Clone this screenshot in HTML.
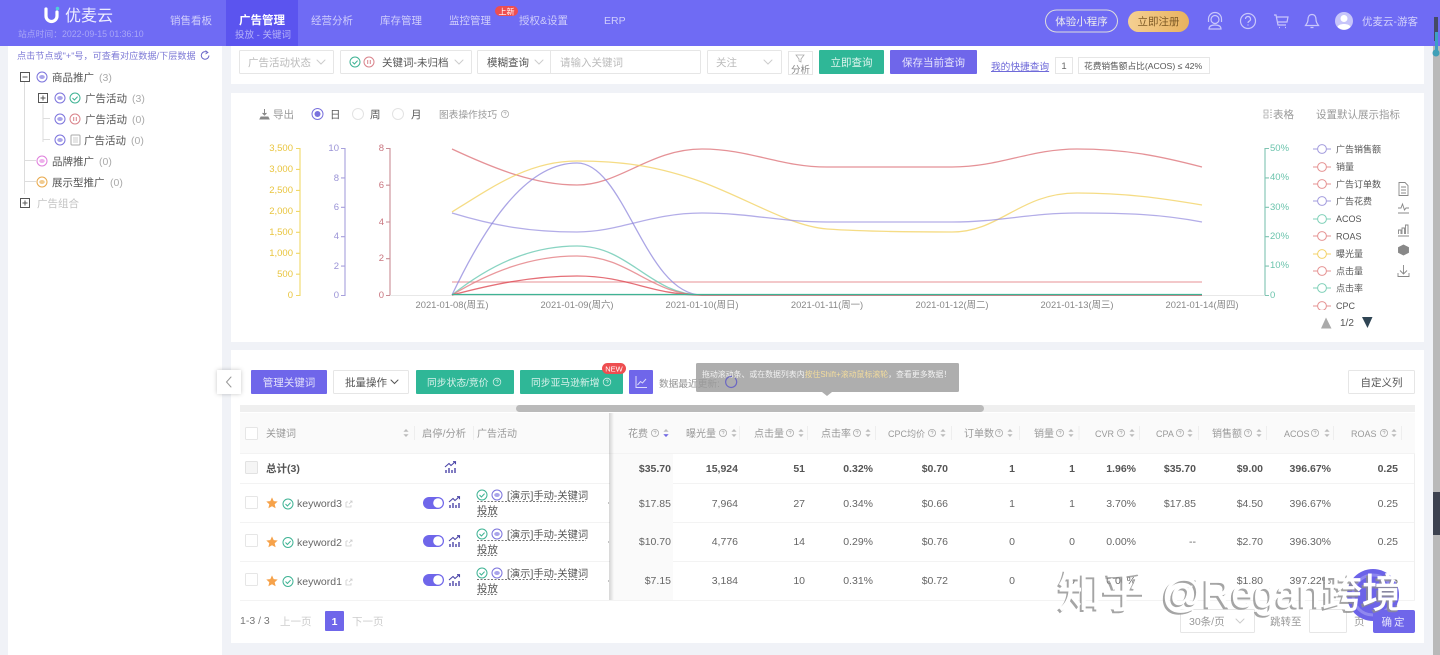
<!DOCTYPE html>
<html lang="zh"><head><meta charset="utf-8"><title>优麦云 - 广告管理</title>
<style>
html,body{margin:0;padding:0;width:1440px;height:655px;overflow:hidden;background:#f0f2f7}
svg{display:block;position:absolute;left:0;top:0;filter:blur(.3px)}
text{font-family:"Liberation Sans","Noto Sans CJK SC",sans-serif;font-size:10.5px;fill:#666}
.nav{fill:#cfcdfb;font-size:10.5px}
.g{fill:#aaa}.d{fill:#555}.w{fill:#fff}
.b{font-weight:bold;fill:#555}
.r{text-anchor:end}.c{text-anchor:middle}
.h{fill:#999;font-size:10px}
.hl{fill:#999;font-size:9px}
.l{fill:#555;font-size:9px}
.x{fill:#888;font-size:9.400px;text-anchor:middle}
.box{fill:#fff;stroke:#e6e6e6}
.cn{fill:none;stroke-linecap:round}
.tree{stroke:#ddd;fill:none}
.ln{fill:none;stroke-width:1.3;opacity:.75}
.ay{fill:#e9c53f;font-size:9.500px}.ap{fill:#9a93d6;font-size:9.500px}.ar{fill:#c9757f;font-size:9.500px}.ag{fill:#6cc4ad;font-size:9.500px}
</style></head><body>
<svg width="1440" height="655" viewBox="0 0 1440 655" xmlns="http://www.w3.org/2000/svg">
<defs>
<g id="chk"><circle r="5" fill="#fff" stroke="#3fb394"/><path d="M-2.500 0l1.900 2 3.200-3.400" fill="none" stroke="#3fb394"/></g>
<g id="pau"><circle r="5" fill="#fff" stroke="#d9838b"/><path d="M-1.300-2v4M1.300-2v4" stroke="#d9838b"/></g>
<g id="sp"><circle r="5" fill="#fff" stroke="#7b73dc"/><ellipse rx="2.800" ry="2" fill="#a9a4ea"/></g>
<g id="sb"><circle r="5" fill="#fff" stroke="#df7fdc"/><ellipse rx="2.800" ry="2" fill="#eeb0ec"/></g>
<g id="sd"><circle r="5" fill="#fff" stroke="#e8a94c"/><ellipse rx="2.800" ry="2" fill="#f1cb90"/></g>
<g id="q"><circle r="3.600" fill="none" stroke="#aaa" stroke-width=".8"/><path d="M-1.100-.9a1.100 1.100 0 1 1 1.600 1l-.5.6M0 1.900v.3" fill="none" stroke="#aaa" stroke-width=".7"/></g>
<g id="s"><path d="M-2.600-1.200L0-4l2.600 2.800zM-2.600 1.200L0 4l2.600-2.800z" fill="#bbb"/></g>
<g id="plus"><rect x="-4.500" y="-4.500" width="9" height="9" fill="#fff" stroke="#555"/><path d="M-2.500 0h5M0-2.500v5" stroke="#555"/></g>
<g id="minus"><rect x="-4.500" y="-4.500" width="9" height="9" fill="#fff" stroke="#555"/><path d="M-2.500 0h5" stroke="#555"/></g>
<g id="tr"><path d="M-5 5v-3M-2 5v-5M1 5v-3M4 5v-5" stroke="#4b45a8" stroke-width="1.400"/><path d="M-6-1L-2-4.500 0-2.500 4-6M2-6.300h2.500v2.500" fill="none" stroke="#4b45a8" stroke-width="1.100"/></g>
<g id="star"><path d="M0-5.600l1.700 3.700 4 .4-3 2.700.9 4L0 3.200l-3.600 2 .9-4-3-2.700 4-.4z" fill="#f6a24a"/></g>
<g id="ext"><path d="M-3-2h2M-3-2v5h5v-2M0 0l3-3M1-3h2v2" fill="none" stroke="#ccc" stroke-width=".8"/></g>
<g id="lgp"><path d="M-9 0h18" stroke="#a29bdd"/><circle r="4.400" fill="#fff" stroke="#a29bdd"/></g>
<g id="lgr"><path d="M-9 0h18" stroke="#e59292"/><circle r="4.400" fill="#fff" stroke="#e59292"/></g>
<g id="lgg"><path d="M-9 0h18" stroke="#7fd0b8"/><circle r="4.400" fill="#fff" stroke="#7fd0b8"/></g>
<g id="lgy"><path d="M-9 0h18" stroke="#f3d268"/><circle r="4.400" fill="#fff" stroke="#f3d268"/></g>
<clipPath id="lgclip"><rect x="1310" y="140" width="100" height="170"/></clipPath>
<linearGradient id="gd" x1="0" x2="1" y1="0" y2="0"><stop offset="0" stop-color="#f5d092"/><stop offset="1" stop-color="#e8b25f"/></linearGradient>
<linearGradient id="sh" x1="0" x2="1" y1="0" y2="0"><stop offset="0" stop-color="#000" stop-opacity=".16"/><stop offset="1" stop-color="#000" stop-opacity="0"/></linearGradient>
</defs>

<!-- backgrounds -->
<rect width="1440" height="655" fill="#f0f2f7"/>
<rect x="8" y="46" width="214" height="609" fill="#fff"/>
<rect x="231" y="46" width="1193" height="38" fill="#fff"/>
<rect x="231" y="93" width="1193" height="249" fill="#fff"/>
<rect x="231" y="350" width="1193" height="293" fill="#fff"/>

<!-- page scrollbar -->
<rect x="1433" y="46" width="7" height="609" fill="#b9b9b9"/>
<rect x="1433" y="0" width="7" height="46" fill="#6f6bf4"/>
<rect x="1434" y="17" width="4" height="24" fill="#444a66"/>
<rect x="1435" y="32" width="3" height="20" fill="#3d9fc4"/>
<circle cx="1436" cy="53" r="3.500" fill="#3fa0b8"/>
<rect x="1433" y="492" width="7" height="43" fill="#3d4250"/>

<!-- header -->
<rect width="1433" height="46" fill="#6f6bf4"/>
<rect x="226" width="72" height="46" fill="#5b54ef"/>
<path d="M46 9v7a5.500 5.500 0 0 0 11 0V12" fill="none" stroke="#fff" stroke-width="3.200" stroke-linecap="round"/>
<circle cx="57.500" cy="8.500" r="1.800" fill="#4fd0d8"/>
<text x="65" y="21" style="font-size:16px;fill:#eeeeff">优麦云</text>
<text x="18" y="37" style="font-size:8.800px;fill:#a9a6f6">站点时间：2022-09-15 01:36:10</text>
<text x="170" y="24" class="nav">销售看板</text>
<text x="239" y="24" class="w" style="font-size:11.500px;font-weight:bold">广告管理</text>
<text x="235" y="38" style="font-size:9.500px;fill:#b6b3f8">投放 - 关键词</text>
<text x="311" y="24" class="nav">经营分析</text>
<text x="380" y="24" class="nav">库存管理</text>
<text x="449" y="24" class="nav">监控管理</text>
<rect x="495" y="6" width="23" height="10" rx="5" fill="#ee4e50"/>
<text x="506.500" y="14.500" class="w c" style="font-size:8px">上新</text>
<text x="519" y="24" class="nav">授权&amp;设置</text>
<text x="604" y="24" class="nav" style="font-size:10.500px">ERP</text>
<rect x="1045.500" y="10" width="72" height="22" rx="11" fill="none" stroke="#ddd" stroke-width="1"/>
<text x="1081.500" y="25" class="c" style="fill:#eee;font-size:10.500px">体验小程序</text>
<rect x="1128" y="11" width="61" height="21" rx="10.500" fill="url(#gd)"/>
<text x="1158.500" y="25" class="c" style="fill:#7d5a26;font-size:10.500px">立即注册</text>
<g fill="none" stroke="#c9c7fa" stroke-width="1.200">
<circle cx="1215" cy="19.500" r="4"/><path d="M1208.500 22v-3a6.500 6.500 0 0 1 13 0v3M1209 29c0-3 3-4 6-4s6 1 6 4z"/>
<circle cx="1248" cy="21" r="7.500"/><path d="M1245.500 19a2.500 2.500 0 1 1 3.500 2.300c-.8.400-1 .8-1 1.700M1248 24.500v1"/>
<path d="M1274 15h2l2 10h8M1277 17h11l-1 5h-9M1279 27.500h1M1285 27.500h1"/>
<path d="M1312 14.500c-3 0-4 2.500-4 5 0 3-1.500 4.500-2.500 6h13c-1-1.500-2.500-3-2.500-6 0-2.500-1-5-4-5zM1310.500 27.500h3"/>
</g>
<circle cx="1344" cy="21" r="9" fill="#c7c5fa"/><circle cx="1344" cy="18.500" r="3.500" fill="#fff"/><path d="M1337.500 27c1-4 12-4 13 0a9 9 0 0 1-13 0z" fill="#fff"/>
<text x="1362" y="25" style="fill:#d5d3fb;font-size:10.500px">优麦云-游客</text>

<!-- sidebar -->
<text x="17" y="59" style="fill:#7d79d6;font-size:9.150px">点击节点或"+"号，可查看对应数据/下层数据</text>
<path d="M207.500 52.500a3.800 3.800 0 1 0 1.400 3" fill="none" stroke="#6b68c8"/><path d="M205.500 50.500l2.500 2-2.500 1.500" fill="none" stroke="#6b68c8" stroke-width=".8"/>
<path class="tree" d="M24.500 82v112M43 104v38M43 118.500h7M43 139.500h7M25 160.500h11M25 181.500h11"/>
<use href="#minus" x="25" y="77"/>
<use href="#sp" x="42" y="77"/><text x="52" y="81" class="d">商品推广</text><text x="99" y="81" class="g">(3)</text>
<use href="#plus" x="43" y="98"/><use href="#sp" x="60" y="98"/><use href="#chk" x="75" y="98"/><text x="85" y="102" class="d">广告活动</text><text x="132" y="102" class="g">(3)</text>
<use href="#sp" x="60" y="119"/><use href="#pau" x="75" y="119"/><text x="85" y="123" class="d">广告活动</text><text x="132" y="123" class="g">(0)</text>
<use href="#sp" x="60" y="140"/><rect x="71" y="135" width="9" height="10" rx="1" fill="#fff" stroke="#aaa"/><path d="M73 138h5M73 140h5M73 142h5" stroke="#bbb" stroke-width=".7"/><text x="84" y="144" class="d">广告活动</text><text x="131" y="144" class="g">(0)</text>
<use href="#sb" x="42" y="161"/><text x="52" y="165" class="d">品牌推广</text><text x="99" y="165" class="g">(0)</text>
<use href="#sd" x="42" y="182"/><text x="52" y="186" class="d">展示型推广</text><text x="110" y="186" class="g">(0)</text>
<use href="#plus" x="25" y="203"/><text x="37" y="207" style="fill:#c4c4c4">广告组合</text>

<!-- filter row -->
<rect class="box" x="239.500" y="50.500" width="94" height="23" rx="1"/><text x="248" y="66" style="fill:#bbb">广告活动状态</text><path class="cn" d="M317 60l4 4 4-4" stroke="#ccc"/>
<rect class="box" x="340.500" y="50.500" width="131" height="23" rx="1"/><use href="#chk" x="355" y="62"/><use href="#pau" x="369" y="62"/><text x="382" y="66" class="d">关键词-未归档</text><path class="cn" d="M455 60l4 4 4-4" stroke="#ccc"/>
<rect class="box" x="477.500" y="50.500" width="223" height="23" rx="1"/><path d="M550.500 51v22" stroke="#e6e6e6"/><text x="487" y="66" class="d">模糊查询</text><path class="cn" d="M535 60l4 4 4-4" stroke="#ccc"/><text x="560" y="66" style="fill:#bbb">请输入关键词</text>
<rect class="box" x="707.500" y="50.500" width="74" height="23" rx="1"/><text x="716" y="66" style="fill:#bbb">关注</text><path class="cn" d="M764 60l4 4 4-4" stroke="#ccc"/>
<rect class="box" x="788.500" y="51.500" width="24" height="23"/><path d="M796 55h8l-3 4v3l-2-1v-2z" fill="none" stroke="#aaa" stroke-width=".8"/><text x="800.500" y="73" class="c" style="font-size:9.500px;fill:#888">分析</text>
<rect x="819" y="50" width="65" height="24" rx="1" fill="#2fb797"/><text x="851.500" y="66" class="c" style="fill:#dff5ee">立即查询</text>
<rect x="890" y="50" width="87" height="24" rx="1" fill="#6f66ea"/><text x="933.500" y="66" class="c" style="fill:#e6e4fc">保存当前查询</text>
<text x="991" y="70" style="fill:#6b66d8;font-size:9.700px;text-decoration:underline">我的快捷查询</text>
<rect class="box" x="1055.500" y="57.500" width="17" height="16"/><text x="1064" y="69" class="c" style="font-size:9.500px">1</text>
<rect class="box" x="1078.500" y="57.500" width="131" height="16"/><text x="1084" y="69" class="d" style="font-size:8.700px">花费销售额占比(ACOS) ≤ 42%</text>

<!-- chart toolbar -->
<path d="M261 117h7l1 2h-9zM264.500 109v6M262.500 113l2 2 2-2" fill="#888" stroke="#888" stroke-width="1"/>
<text x="273" y="118" style="fill:#999">导出</text>
<circle cx="317.500" cy="114" r="5.500" fill="#fff" stroke="#7a72dd"/><circle cx="317.500" cy="114" r="3" fill="#7a72dd"/><text x="330" y="118" class="d">日</text>
<circle cx="358" cy="114" r="5.500" fill="#fff" stroke="#e3e3e3"/><text x="370" y="118" class="d">周</text>
<circle cx="398" cy="114" r="5.500" fill="#fff" stroke="#e3e3e3"/><text x="411" y="118" class="d">月</text>
<text x="439" y="118" style="fill:#999;font-size:9.700px">图表操作技巧</text><use href="#q" x="505" y="114"/>
<path d="M1264 110h4v3h-4zM1264 115h4v3h-4zM1270 110h2M1270 112.500h2M1270 115h2M1270 117.500h2" fill="none" stroke="#aaa" stroke-width=".8"/>
<text x="1273" y="118" style="fill:#999">表格</text>
<text x="1316" y="118" style="fill:#999;font-size:10.500px">设置默认展示指标</text>

<!-- chart axes -->
<g fill="none" stroke-width="1.100">
<path d="M296 148.500h4v147h-4M296 169.400h4M296 190.400h4M296 211.400h4M296 232.300h4M296 253.300h4M296 274.200h4" stroke="#f0d868"/>
<path d="M341 148.500h4v147h-4M341 177.900h4M341 207.300h4M341 236.700h4M341 266.100h4" stroke="#a7a0dc"/>
<path d="M386 148.500h4v147h-4M386 185.200h4M386 222h4M386 258.700h4" stroke="#c98d95"/>
<path d="M1269 148.500h-4v147h4M1269 177.900h-4M1269 207.300h-4M1269 236.700h-4M1269 266.100h-4" stroke="#7fc4b2"/>
</g>
<path d="M390 295.500h875" stroke="#e8e8e8"/>
<text x="293" y="151" class="r ay">3,500</text><text x="293" y="172" class="r ay">3,000</text><text x="293" y="193" class="r ay">2,500</text><text x="293" y="214" class="r ay">2,000</text><text x="293" y="235" class="r ay">1,500</text><text x="293" y="256" class="r ay">1,000</text><text x="293" y="277" class="r ay">500</text><text x="293" y="298" class="r ay">0</text>
<text x="339" y="151" class="r ap">10</text><text x="339" y="181" class="r ap">8</text><text x="339" y="210" class="r ap">6</text><text x="339" y="239" class="r ap">4</text><text x="339" y="269" class="r ap">2</text><text x="339" y="298" class="r ap">0</text>
<text x="384" y="151" class="r ar">8</text><text x="384" y="188" class="r ar">6</text><text x="384" y="225" class="r ar">4</text><text x="384" y="261" class="r ar">2</text><text x="384" y="298" class="r ar">0</text>
<text x="1270" y="151" class="ag">50%</text><text x="1270" y="180" class="ag">40%</text><text x="1270" y="210" class="ag">30%</text><text x="1270" y="239" class="ag">20%</text><text x="1270" y="268" class="ag">10%</text><text x="1270" y="298" class="ag">0</text>
<text x="452" y="308" class="x">2021-01-08(周五)</text><text x="577" y="308" class="x">2021-01-09(周六)</text><text x="702" y="308" class="x">2021-01-10(周日)</text><text x="827" y="308" class="x">2021-01-11(周一)</text><text x="952" y="308" class="x">2021-01-12(周二)</text><text x="1077" y="308" class="x">2021-01-13(周三)</text><text x="1202" y="308" class="x">2021-01-14(周四)</text>

<!-- chart lines -->
<path class="ln" stroke="#e58a8f" d="M452 282H1202"/>
<path class="ln" stroke="#dc6d74" d="M452 149C495 169 535 185 577 185C620 185 650 149 702 149C750 149 780 167 827 167H952C1000 167 1030 149 1077 149C1125 149 1160 156 1202 167"/>
<path class="ln" stroke="#f2d05c" d="M452 212C495 185 530 161 577 161C625 161 660 167 702 182C750 200 790 226 827 229C870 232 920 232 952 232C1000 232 1020 193 1077 193C1125 193 1160 198 1202 205"/>
<path class="ln" stroke="#9a92e0" d="M452 213C495 226 530 232 577 232C620 232 650 213 702 213C750 213 780 222 827 222H952C1000 222 1030 213 1077 213C1125 213 1160 214 1202 222"/>
<path class="ln" stroke="#8f87dc" d="M452 295C490 215 530 163 577 163C625 163 645 295 702 295H1202"/>
<path class="ln" stroke="#62c6ae" d="M452 295C490 265 530 246 577 246C630 246 650 295 702 295H1202"/>
<path class="ln" stroke="#e2757b" d="M452 295C490 272 530 256 577 256C630 256 650 295 702 295H1202"/>
<path class="ln" stroke="#dc3f4a" d="M452 295C490 285 530 276 577 276C630 276 650 295 702 295H1202"/>
<path d="M452 294.500H1202" fill="none" stroke="#3fb394" stroke-width="1.300"/>

<!-- legend -->
<g clip-path="url(#lgclip)">
<use href="#lgp" x="1322" y="149"/><use href="#lgr" x="1322" y="167"/><use href="#lgr" x="1322" y="184"/><use href="#lgp" x="1322" y="201"/><use href="#lgg" x="1322" y="219"/><use href="#lgr" x="1322" y="236"/><use href="#lgy" x="1322" y="254"/><use href="#lgr" x="1322" y="271"/><use href="#lgg" x="1322" y="288"/><use href="#lgr" x="1322" y="306"/>
</g>
<text x="1336" y="152.500" class="l">广告销售额</text><text x="1336" y="170" class="l">销量</text><text x="1336" y="187.500" class="l">广告订单数</text><text x="1336" y="204.500" class="l">广告花费</text><text x="1336" y="222" class="l">ACOS</text><text x="1336" y="239.500" class="l">ROAS</text><text x="1336" y="257" class="l">曝光量</text><text x="1336" y="274.500" class="l">点击量</text><text x="1336" y="291.500" class="l">点击率</text><text x="1336" y="309" class="l">CPC</text>
<path d="M1321 328.500l5-11 5.500 11z" fill="#aaa"/><text x="1340" y="326" class="l" style="font-size:10px">1/2</text><path d="M1362 317h10.500l-5 11z" fill="#2f4554"/>
<g fill="none" stroke="#888" stroke-width=".9">
<path d="M1399 182.500h6l3 3v10h-9zM1401 187h5M1401 190h5M1401 193h5"/>
<path d="M1398 208h3l1.500-4 2 6 1.500-2h3M1398 213h11"/>
<path d="M1398.500 234v-4h2.500v4M1402 234v-6h2.500v6M1405.500 234v-9h2.500v9M1398 236h11"/>
<path d="M1403.500 245l5 2.500v5l-5 2.500-5-2.500v-5z" fill="#888"/>
<path d="M1403.500 265v9M1400 270.500l3.500 3.500 3.500-3.500M1398 273v3.500h11V273"/>
</g>

<!-- table toolbar -->
<rect x="217" y="370" width="24" height="24" fill="#fff" style="filter:drop-shadow(0 0 2px rgba(0,0,0,.22))"/>
<path class="cn" d="M231 377l-4.500 5 4.500 5" stroke="#999"/>
<rect x="251" y="370" width="76" height="24" rx="1" fill="#6f66ea"/><text x="289" y="386" class="c" style="fill:#e3e1fb">管理关键词</text>
<rect class="box" x="333.500" y="370.500" width="75" height="23" rx="1"/><text x="345" y="386" class="d">批量操作</text><path class="cn" d="M391 380l3.500 3.500 3.500-3.500" stroke="#555"/>
<rect x="416" y="370" width="98" height="24" rx="1" fill="#2fb797"/><text x="427" y="386" style="fill:#d7f1ea;font-size:9.800px">同步状态/竞价</text><g transform="translate(497 382)"><circle r="3.800" fill="none" stroke="#cdeee5" stroke-width=".8"/><path d="M-1-.9a1.100 1.100 0 1 1 1.500 1L0 .8M0 2v.3" fill="none" stroke="#cdeee5" stroke-width=".7"/></g>
<rect x="520" y="370" width="103" height="24" rx="1" fill="#2fb797"/><text x="531" y="386" style="fill:#d7f1ea;font-size:9.800px">同步亚马逊新增</text><g transform="translate(607 382)"><circle r="3.800" fill="none" stroke="#cdeee5" stroke-width=".8"/><path d="M-1-.9a1.100 1.100 0 1 1 1.500 1L0 .8M0 2v.3" fill="none" stroke="#cdeee5" stroke-width=".7"/></g>
<rect x="602" y="363" width="24" height="11" rx="5.500" fill="#ee4e50"/><text x="614" y="371.500" class="c w" style="font-size:7.500px">NEW</text>
<rect x="629" y="370" width="24" height="24" rx="1" fill="#6f66ea"/><path d="M636 376v11.500h11M637.500 385l3-3.500 2 1.500 3.500-4" fill="none" stroke="#dcdafa"/>
<text x="659" y="387" style="fill:#aaa;font-size:9.700px">数据最近更新:</text>
<path d="M735 378a5.500 5.500 0 1 1-3-1.500" fill="none" stroke="#6f66ea" stroke-width="1.200"/>
<rect class="box" x="1348.500" y="370.500" width="66" height="23" rx="1"/><text x="1381.500" y="386" class="c d">自定义列</text>

<!-- table -->
<rect x="240" y="405" width="1175" height="7" fill="#efefef"/>
<rect x="516" y="405" width="468" height="7" rx="3.500" fill="#bababa"/>
<rect x="240" y="413" width="1175" height="40" fill="#fafafa"/>
<path d="M240 453.500h1175M240 483.500h1175M240 522.500h1175M240 561.500h1175M240 600.500h1175" stroke="#f3f3f3"/>
<rect x="610" y="454" width="63" height="146" fill="#fafafa"/>
<path d="M1414.500 454v146" stroke="#efefef"/>

<!-- tooltip -->
<rect x="696" y="363" width="263" height="29" rx="1.500" fill="#aeaeae"/>
<path d="M822 392h10l-5 4z" fill="#aeaeae"/>
<text x="702" y="377" style="font-size:7.900px;fill:#f2f2f2">拖动滚动条、或在数据列表内<tspan style="fill:#f3dc9c">按住Shift+滚动鼠标滚轮</tspan>，查看更多数据！</text>
<text x="659" y="387" style="fill:#777;font-size:9.700px;opacity:.35">数据最近更新:</text>
<path d="M735 378a5.500 5.500 0 1 1-3-1.500" fill="none" stroke="#5a55c8" stroke-width="1.200" opacity=".8"/>

<!-- right headers -->
<text x="628" y="437" class="h">花费</text><use href="#q" x="655" y="433"/><use href="#s" x="666" y="433"/><path d="M663.400 434.200L666 437l2.600-2.800z" fill="#6f66ea"/>
<text x="686" y="437" class="h">曝光量</text><use href="#q" x="723" y="433"/><use href="#s" x="734" y="433"/>
<text x="754" y="437" class="h">点击量</text><use href="#q" x="790" y="433"/><use href="#s" x="801" y="433"/>
<text x="821" y="437" class="h">点击率</text><use href="#q" x="857" y="433"/><use href="#s" x="868" y="433"/>
<text x="888" y="437" class="hl">CPC均价</text><use href="#q" x="932" y="433"/><use href="#s" x="943" y="433"/>
<text x="964" y="437" class="h">订单数</text><use href="#q" x="999" y="433"/><use href="#s" x="1010" y="433"/>
<text x="1034" y="437" class="h">销量</text><use href="#q" x="1060" y="433"/><use href="#s" x="1071" y="433"/>
<text x="1095" y="437" class="hl">CVR</text><use href="#q" x="1121" y="433"/><use href="#s" x="1132" y="433"/>
<text x="1156" y="437" class="hl">CPA</text><use href="#q" x="1180" y="433"/><use href="#s" x="1190" y="433"/>
<text x="1212" y="437" class="h">销售额</text><use href="#q" x="1248" y="433"/><use href="#s" x="1259" y="433"/>
<text x="1284" y="437" class="hl">ACOS</text><use href="#q" x="1315" y="433"/><use href="#s" x="1327" y="433"/>
<text x="1351" y="437" class="hl">ROAS</text><use href="#q" x="1384" y="433"/><use href="#s" x="1394" y="433"/>
<path d="M739.500 426v14M807.500 426v14M875.500 426v14M951.500 426v14M1019.500 426v14M1079 426v14M1139.500 426v14M1198.500 426v14M1266.500 426v14M1333.500 426v14M1401.500 426v14" stroke="#eee"/>

<!-- right values -->
<text x="671" y="472" class="r b">$35.70</text><text x="738" y="472" class="r b">15,924</text><text x="805" y="472" class="r b">51</text><text x="873" y="472" class="r b">0.32%</text><text x="948" y="472" class="r b">$0.70</text><text x="1015" y="472" class="r b">1</text><text x="1075" y="472" class="r b">1</text><text x="1136" y="472" class="r b">1.96%</text><text x="1196" y="472" class="r b">$35.70</text><text x="1263" y="472" class="r b">$9.00</text><text x="1331" y="472" class="r b">396.67%</text><text x="1398" y="472" class="r b">0.25</text>
<text x="671" y="507" class="r">$17.85</text><text x="738" y="507" class="r">7,964</text><text x="805" y="507" class="r">27</text><text x="873" y="507" class="r">0.34%</text><text x="948" y="507" class="r">$0.66</text><text x="1015" y="507" class="r">1</text><text x="1075" y="507" class="r">1</text><text x="1136" y="507" class="r">3.70%</text><text x="1196" y="507" class="r">$17.85</text><text x="1263" y="507" class="r">$4.50</text><text x="1331" y="507" class="r">396.67%</text><text x="1398" y="507" class="r">0.25</text>
<text x="671" y="545" class="r">$10.70</text><text x="738" y="545" class="r">4,776</text><text x="805" y="545" class="r">14</text><text x="873" y="545" class="r">0.29%</text><text x="948" y="545" class="r">$0.76</text><text x="1015" y="545" class="r">0</text><text x="1075" y="545" class="r">0</text><text x="1136" y="545" class="r">0.00%</text><text x="1196" y="545" class="r">--</text><text x="1263" y="545" class="r">$2.70</text><text x="1331" y="545" class="r">396.30%</text><text x="1398" y="545" class="r">0.25</text>
<text x="671" y="584" class="r">$7.15</text><text x="738" y="584" class="r">3,184</text><text x="805" y="584" class="r">10</text><text x="873" y="584" class="r">0.31%</text><text x="948" y="584" class="r">$0.72</text><text x="1015" y="584" class="r">0</text><text x="1075" y="584" class="r">0</text><text x="1136" y="584" class="r">0.00%</text><text x="1196" y="584" class="r">--</text><text x="1263" y="584" class="r">$1.80</text><text x="1331" y="584" class="r">397.22%</text><text x="1398" y="584" class="r">0.25</text>

<!-- fixed left columns -->
<rect x="240" y="413" width="369" height="187" fill="#fff"/>
<rect x="240" y="413" width="369" height="40" fill="#fafafa"/>
<rect x="609" y="413" width="5" height="187" fill="url(#sh)"/>
<path d="M240 453.500h369M240 483.500h369M240 522.500h369M240 561.500h369M240 600.500h369" stroke="#f3f3f3"/>
<path d="M608 503h1M608 542h1M608 581h1" stroke="#888"/>
<rect class="box" x="245.500" y="427.500" width="12" height="12" rx="1"/><text x="266" y="437" class="h">关键词</text><use href="#s" x="406" y="433"/>
<path d="M414.500 426v14M473.500 426v14" stroke="#eee"/>
<text x="422" y="437" class="h" style="font-size:10.300px">启停/分析</text><text x="477" y="437" class="h">广告活动</text>
<rect x="245.500" y="461.500" width="12" height="12" rx="1" fill="#f5f5f5" stroke="#e2e2e2"/><text x="266" y="472" class="b">总计(3)</text><use href="#tr" x="451" y="468"/>

<!-- row 1 -->
<rect class="box" x="245.500" y="496.500" width="12" height="12" rx="1"/><use href="#star" x="272" y="503"/><use href="#chk" x="288" y="504"/><text x="297" y="507">keyword3</text><use href="#ext" x="349" y="504"/>
<rect x="423" y="497" width="21" height="12" rx="6" fill="#6f66ea"/><circle cx="438" cy="503" r="4.800" fill="#fff"/><use href="#tr" x="455" y="503"/>
<use href="#chk" x="482" y="495"/><use href="#sp" x="497" y="495"/><text x="507" y="499" class="d" style="font-size:10.300px">[演示]手动-关键词</text><text x="477" y="514" class="d">投放</text>
<path d="M477 501.500h109M477 516.500h20" stroke="#777" stroke-dasharray="2 1.500"/>
<!-- row 2 -->
<rect class="box" x="245.500" y="534.500" width="12" height="12" rx="1"/><use href="#star" x="272" y="542"/><use href="#chk" x="288" y="542.500"/><text x="297" y="546">keyword2</text><use href="#ext" x="349" y="543"/>
<rect x="423" y="535" width="21" height="12" rx="6" fill="#6f66ea"/><circle cx="438" cy="541" r="4.800" fill="#fff"/><use href="#tr" x="455" y="542"/>
<use href="#chk" x="482" y="534"/><use href="#sp" x="497" y="534"/><text x="507" y="538" class="d" style="font-size:10.300px">[演示]手动-关键词</text><text x="477" y="553" class="d">投放</text>
<path d="M477 540.500h109M477 555.500h20" stroke="#777" stroke-dasharray="2 1.500"/>
<!-- row 3 -->
<rect class="box" x="245.500" y="573.500" width="12" height="12" rx="1"/><use href="#star" x="272" y="581"/><use href="#chk" x="288" y="581.500"/><text x="297" y="585">keyword1</text><use href="#ext" x="349" y="582"/>
<rect x="423" y="574" width="21" height="12" rx="6" fill="#6f66ea"/><circle cx="438" cy="580" r="4.800" fill="#fff"/><use href="#tr" x="455" y="581"/>
<use href="#chk" x="482" y="573"/><use href="#sp" x="497" y="573"/><text x="507" y="577" class="d" style="font-size:10.300px">[演示]手动-关键词</text><text x="477" y="592" class="d">投放</text>
<path d="M477 579.500h109M477 594.500h20" stroke="#777" stroke-dasharray="2 1.500"/>

<!-- pagination -->
<text x="240" y="624" style="fill:#777">1-3 / 3</text><text x="280" y="625" style="fill:#ccc">上一页</text>
<rect x="325" y="611" width="19" height="20" rx="1" fill="#6f66ea"/><text x="334.500" y="625" class="c w" style="font-weight:bold">1</text>
<text x="352" y="625" style="fill:#ccc">下一页</text>
<rect class="box" x="1180.500" y="609.500" width="74" height="23" rx="1"/><text x="1189" y="625" style="fill:#999">30条/页</text><path class="cn" d="M1236 619l4 4 4-4" stroke="#ccc"/>
<text x="1270" y="625" style="fill:#999">跳转至</text>
<rect class="box" x="1309.500" y="609.500" width="37" height="23" rx="1"/>
<text x="1354" y="625" style="fill:#999">页</text>

<!-- floating badge + watermark -->
<circle cx="1373" cy="595" r="26" fill="#6c63e8"/>
<circle cx="1373" cy="595" r="20" fill="none" stroke="#8f88ee" stroke-width="3"/>
<rect x="1373" y="610" width="42" height="23" rx="2" fill="#6f66ea"/><text x="1394" y="625.500" class="c" style="fill:#e6e4fc;font-size:10.500px;letter-spacing:2px">确定</text>
<text x="1056" y="609" style="font-size:44px;fill:#8f8f8f;opacity:.8;stroke:#8f8f8f;stroke-width:.6">知乎</text>
<text x="1160" y="609" style="font-size:40px;fill:#8f8f8f;opacity:.8;stroke:#8f8f8f;stroke-width:.6">@Regan</text>
<text x="1320" y="609" style="font-size:40px;fill:#8f8f8f;opacity:.8;stroke:#8f8f8f;stroke-width:.6">跨境</text>
<text x="1058" y="607" style="font-size:44px;fill:#fff;stroke:#fff;stroke-width:.7">知乎</text>
<text x="1162" y="607" style="font-size:40px;fill:#fff;stroke:#fff;stroke-width:.7">@Regan</text>
<text x="1322" y="607" style="font-size:40px;fill:#fff;stroke:#fff;stroke-width:.7">跨境</text>
</svg>
</body></html>
